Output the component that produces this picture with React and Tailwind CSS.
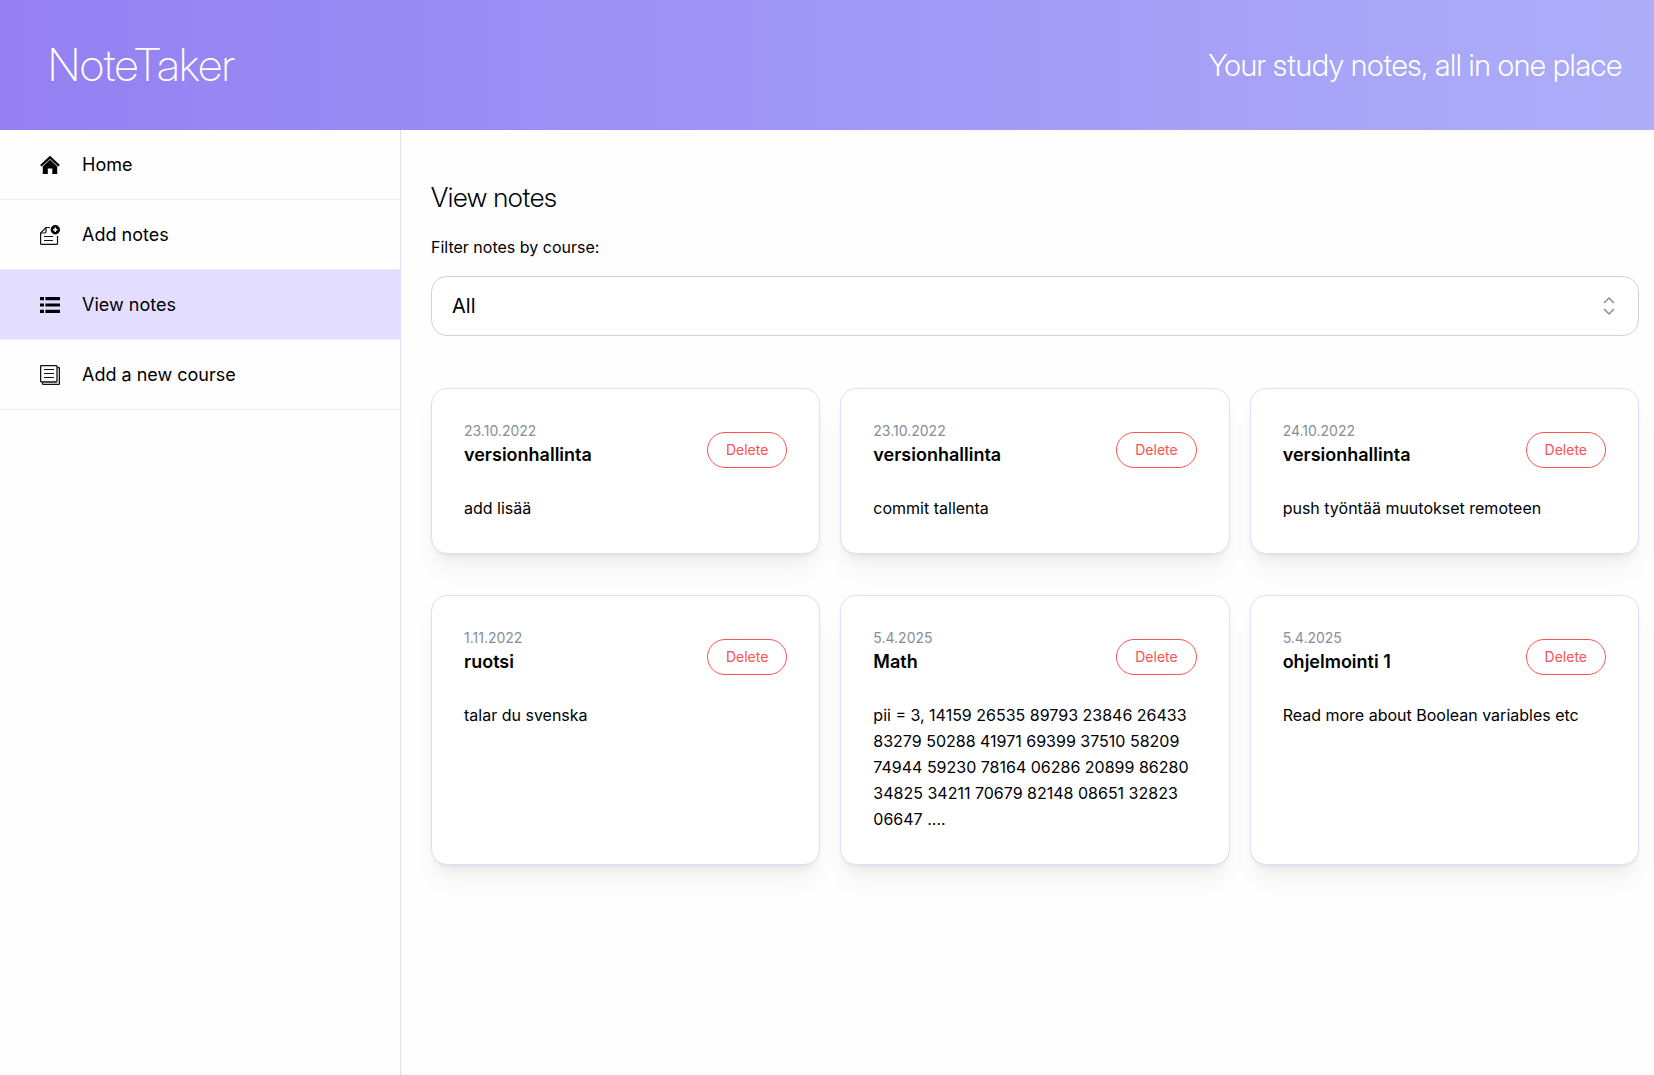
const notes = [
  { date: "23.10.2022", course: "versionhallinta", text: "add lisää" },
  { date: "23.10.2022", course: "versionhallinta", text: "commit tallenta" },
  { date: "24.10.2022", course: "versionhallinta", text: "push työntää muutokset remoteen" },
  { date: "1.11.2022", course: "ruotsi", text: "talar du svenska" },
  {
    date: "5.4.2025",
    course: "Math",
    text: "pii = 3, 14159 26535 89793 23846 26433 83279 50288 41971 69399 37510 58209 74944 59230 78164 06286 20899 86280 34825 34211 70679 82148 08651 32823 06647 ....",
  },
  { date: "5.4.2025", course: "ohjelmointi 1", text: "Read more about Boolean variables etc" },
];

function HomeIcon() {
  return (
    <svg className="size-5" viewBox="0 0 20 20" fill="none" aria-hidden="true">
      <path d="M.8 10.8 10 2.2l9.2 8.6" stroke="#000" strokeWidth="2.2" />
      <path d="M10 4 17.2 11V19H12.3V13.500H7.800V19H2.800V11Z" fill="#000" />
      <path d="M2 12 10 4.500l8 7.500" stroke="#aaa" strokeWidth=".9" />
    </svg>
  );
}

function AddNoteIcon() {
  return (
    <svg className="size-5" viewBox="0 0 20 20" fill="none" aria-hidden="true">
      <path d="M10 2.5H6L.6 8v10.4q0 1 1 1h14.9q1 0 1-1V11" stroke="#111" strokeWidth="1.2" />
      <path d="M6 2.5v4.3Q6 8 4.8 8H.6" stroke="#111" strokeWidth="1.2" />
      <path d="M4 11.5h9M4 15.5h9" stroke="#111" strokeWidth="1.2" />
      <circle cx="15.3" cy="4.8" r="4.7" fill="#000" />
      <path d="M15.3 2.6v4.4M13.1 4.8h4.4" stroke="#fff" strokeWidth="1.5" />
    </svg>
  );
}

function ListIcon() {
  return (
    <svg className="size-5" viewBox="0 0 20 20" fill="#000" aria-hidden="true">
      <path d="M0 2h4v3.2H0zM5.4 2H20v3.2H5.4zM0 8.4h4v3.2H0zM5.4 8.4H20v3.2H5.4zM0 14.8h4V18H0zM5.4 14.8H20V18H5.4z" />
    </svg>
  );
}

function PagesIcon() {
  return (
    <svg className="size-5" viewBox="0 0 20 20" fill="none" aria-hidden="true">
      <path d="M17.5 2.5h.9q1 0 1 1v14.9q0 1-1 1H3.5q-1 0-1-1v-.9" stroke="#111" strokeWidth="1.3" />
      <rect x=".6" y=".6" width="16.4" height="16.4" rx="1" stroke="#111" strokeWidth="1.3" />
      <path d="M4 4.5h10M4 8.5h10M4 12.5h10" stroke="#111" strokeWidth="1.1" />
    </svg>
  );
}

const links = [
  { label: "Home", Icon: HomeIcon },
  { label: "Add notes", Icon: AddNoteIcon },
  { label: "View notes", Icon: ListIcon, active: true },
  { label: "Add a new course", Icon: PagesIcon },
];

function NoteCard({ date, course, text }) {
  return (
    <article className="rounded-2xl border border-[#e5dbff] bg-white p-8 shadow-[0_1px_3px_rgba(0,0,0,0.05),0_20px_25px_-5px_rgba(0,0,0,0.05),0_10px_10px_-5px_rgba(0,0,0,0.04)]">
      <div className="flex items-center justify-between">
        <div className="pb-2.5">
          <p className="text-sm leading-5 text-[#868e96]">{date}</p>
          <h2 className="text-lg leading-7 font-semibold">{course}</h2>
        </div>
        <button type="button" className="h-9 rounded-full border border-[#fa5252] px-[18px] text-sm text-[#fa5252]">
          Delete
        </button>
      </div>
      <p className="mt-4 text-base leading-[26px]">{text}</p>
    </article>
  );
}

export default function App() {
  return (
    <div className="flex min-h-screen flex-col bg-[#fefefe] font-['Inter',sans-serif] text-black">
      <header className="flex h-[130px] items-center justify-between bg-[linear-gradient(to_right,#9480f2,#adadf9)] pr-8 pl-12 font-['Inter_Display','Inter',sans-serif] text-white">
        <div className="text-[45px] font-extralight">NoteTaker</div>
        <p className="text-3xl font-light">Your study notes, all in one place</p>
      </header>
      <div className="flex flex-1">
        <nav className="w-[401px] shrink-0 border-r border-[#e0dcff]">
          {links.map(({ label, Icon, active }) => (
            <a
              key={label}
              href="#"
              className={
                active
                  ? "flex h-[70px] items-center gap-[22px] border-b border-[#ebebfa] bg-[#e3deff] pl-10 text-lg"
                  : "flex h-[70px] items-center gap-[22px] border-b border-[#ebebfa] pl-10 text-lg"
              }
            >
              <Icon />
              {label}
            </a>
          ))}
        </nav>
        <main className="min-w-0 flex-1 pt-12 pr-[15px] pb-10 pl-[30px]">
          <h1 className="font-['Inter_Display','Inter',sans-serif] text-[27px] leading-10 font-light">View notes</h1>
          <label htmlFor="course" className="mt-4 block text-base leading-[26px]">
            Filter notes by course:
          </label>
          <div className="relative mt-4">
            <select id="course" className="h-[60px] w-full appearance-none rounded-2xl border border-[#ced4da] bg-white px-5 text-xl">
              <option>All</option>
            </select>
            <svg className="pointer-events-none absolute top-5 right-5 size-5" viewBox="0 0 20 20" fill="none" stroke="#868e96" strokeWidth="1.5" aria-hidden="true">
              <path d="M5 7l5-5 5 5M5 13l5 5 5-5" />
            </svg>
          </div>
          <section className="mt-[52px] grid grid-cols-3 gap-x-5 gap-y-[41px]">
            {notes.map((note, i) => (
              <NoteCard key={i} {...note} />
            ))}
          </section>
        </main>
      </div>
    </div>
  );
}
